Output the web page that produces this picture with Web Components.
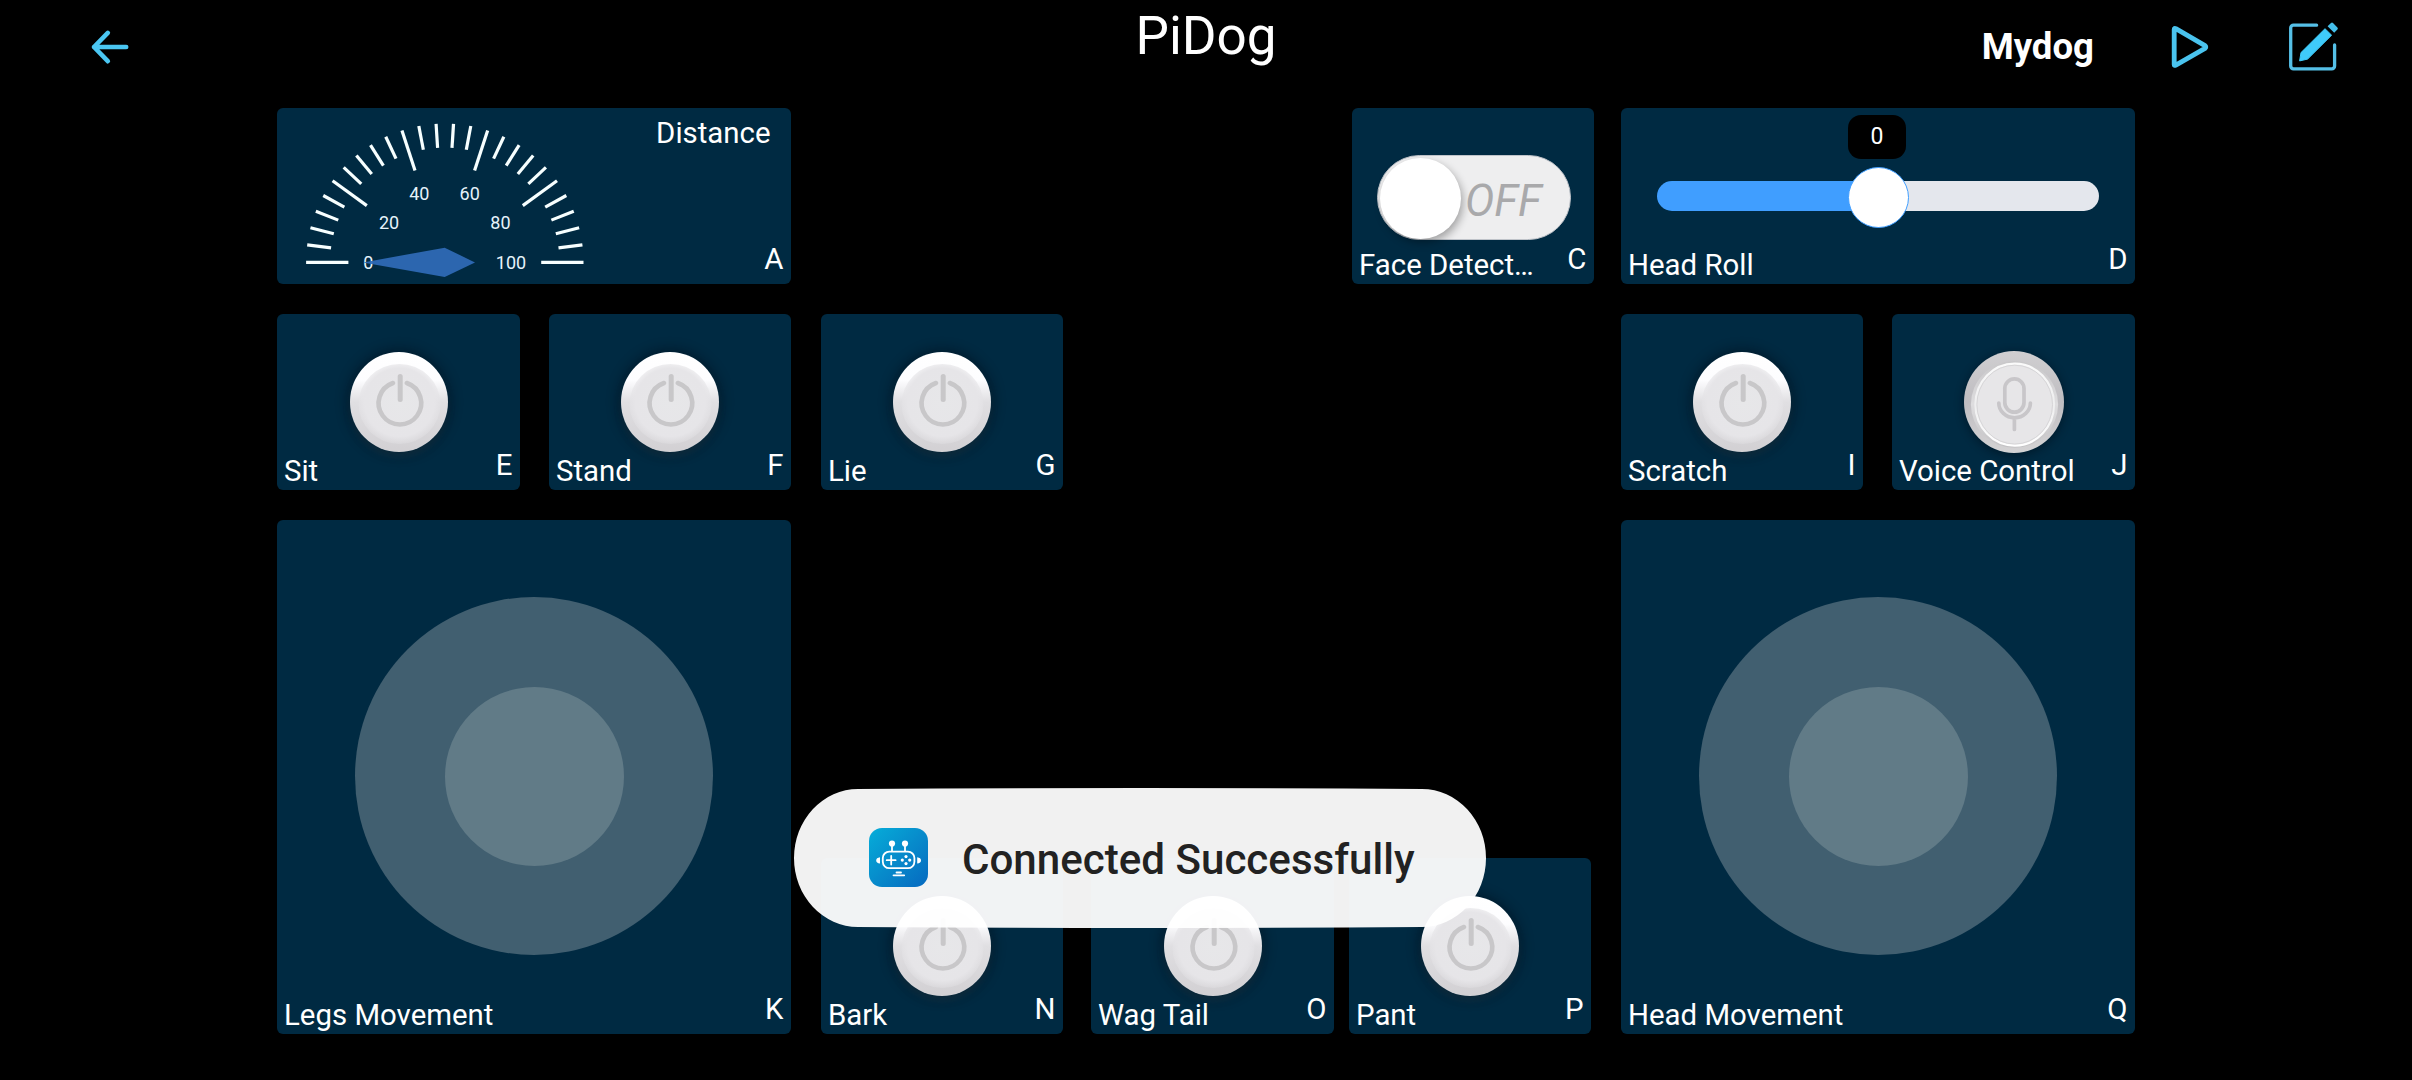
<!DOCTYPE html>
<html lang="en">
<head>
<meta charset="utf-8">
<title>PiDog</title>
<style>
  html, body { margin: 0; height: 100%; background: #000; overflow: hidden; }
  body { font-family: Roboto, "Liberation Sans", sans-serif; color: #fff; }
</style>
</head>
<body>
<pidog-app></pidog-app>
<script>
const define = (name, html, setup) => customElements.define(name, class extends HTMLElement {
  constructor() {
    super();
    this.attachShadow({ mode: 'open' });
  }
  connectedCallback() {
    this.shadowRoot.innerHTML = html;
    if (setup) setup(this.shadowRoot, this);
  }
});

define('app-header', `
<style>
  :host { display: grid; grid-template-columns: 1fr auto 1fr; height: 94px; padding: 0 72px 0 88px; box-sizing: border-box; }
  .back { align-self: center; display: flex; }
  h1 { margin: 5px 0 0; font-size: 53px; font-weight: 400; line-height: 62px; position: relative; left: -8px; }
  .right { display: flex; align-items: center; justify-content: flex-end; }
  .name { font-size: 36.6px; font-weight: 700; line-height: 43px; margin: 0 76px 2px 0; }
  .play { margin-right: 78px; }
  svg { display: block; flex: none; }
</style>
<div class="back"><svg width="44" height="44" viewBox="88 25 44 44" fill="none" stroke="#4ac6f2" stroke-width="4.6" stroke-linecap="round" stroke-linejoin="round"><path d="M126.2 47H94M107.8 32.9L94 47l13.8 14.2"/></svg></div>
<h1><slot></slot></h1>
<div class="right">
  <span class="name"><slot name="device"></slot></span>
  <svg class="play" width="40" height="48" viewBox="2170 23 40 48" fill="none" stroke="#4ac3ee" stroke-width="4.8" stroke-linejoin="round"><path d="M2174.2 29.4Q2174.2 27.8 2175.8 28.6L2205 45.6Q2206.6 47 2205 48.4L2175.8 65.2Q2174.2 66 2174.2 64.4Z"/></svg>
  <svg width="52" height="54" viewBox="2288 20 52 54">
    <path d="M2316.6 25.2H2293.5a2.8 2.8 0 0 0-2.8 2.8V66a2.8 2.8 0 0 0 2.8 2.8H2331.8a2.8 2.8 0 0 0 2.8-2.8V45" fill="none" stroke="#55bfe6" stroke-width="3.3" stroke-linecap="round"/>
    <path d="M2299.6 60.9L2301 52.6 2325 28.7 2331.6 35.2 2307.6 59.1Z" fill="#3fcbfa" stroke="#3fcbfa" stroke-width="1" stroke-linejoin="round"/>
    <path d="M2327.6 26.3L2331 22.9Q2332 21.9 2333 22.9L2337.4 27.4Q2338.4 28.4 2337.4 29.4L2334.2 32.7Z" fill="#45bfeb"/>
  </svg>
</div>`);

/* Card: the widget and the caption strip share one grid cell, so the widget stays centred. */
define('widget-card', `
<style>
  :host { display: grid; grid-template: minmax(0, 1fr) / minmax(0, 1fr); width: 242px; height: 176px; flex: none; background: #002a42; border-radius: 6px; overflow: hidden; font-size: 29.4px; line-height: 34px; }
  :host([size="wide"]) { width: 514px; }
  :host([size="large"]) { width: 514px; height: 514px; }
  .body, .foot, .top { grid-area: 1 / 1; }
  .body { display: flex; align-items: center; justify-content: center; }
  .top { align-self: start; justify-self: end; padding: 8px 20.5px 0 0; }
  .foot { align-self: end; display: flex; justify-content: space-between; align-items: flex-end; padding: 0 7.5px 2px 7px; }
  .key { margin-bottom: 6px; }
  .foot span { white-space: nowrap; }
</style>
<div class="body"><slot></slot></div>
<div class="top"><slot name="title"></slot></div>
<div class="foot"><span class="label"></span><span class="key"></span></div>`,
(root, el) => {
  root.querySelector('.label').textContent = el.getAttribute('label') || '';
  root.querySelector('.key').textContent = el.getAttribute('key');
});

define('power-button', `
<style>
  :host { display: block; width: 98px; height: 100px; border-radius: 50%; box-shadow: 0 0 12px 3px rgba(0,10,20,.42), 0 5px 6px rgba(40,70,84,.4); }
  svg { display: block; }
</style>
<svg width="98" height="100" viewBox="0 0 98 100">
  <defs>
    <linearGradient id="o" x1="0" y1="0" x2="0" y2="1"><stop offset="0" stop-color="#fff"/><stop offset=".28" stop-color="#fdfdff"/><stop offset=".5" stop-color="#e0dfe2"/><stop offset="1" stop-color="#d2d0d3"/></linearGradient>
    <radialGradient id="i" cx=".5" cy=".48" r=".52"><stop offset="0" stop-color="#e7e7e9"/><stop offset=".82" stop-color="#e6e5e8"/><stop offset="1" stop-color="#e4e3e6" stop-opacity=".35"/></radialGradient>
  </defs>
  <ellipse cx="49" cy="50" rx="49" ry="50" fill="url(#o)"/>
  <ellipse cx="49.5" cy="52" rx="41" ry="40" fill="url(#i)"/>
  <g fill="none" stroke="#c8c7c9" stroke-linecap="round"><path d="M43 31A21.3 21.3 0 1 0 56.8 31" stroke-width="4.6"/><path d="M50.2 24.6V47.6" stroke-width="5"/></g>
</svg>`);

define('mic-button', `
<style>
  :host { display: block; width: 100px; height: 102px; border-radius: 50%; box-shadow: 0 2px 8px 1px rgba(0,10,20,.45); }
  svg { display: block; }
</style>
<svg width="100" height="102" viewBox="0 0 100 102">
  <defs>
    <linearGradient id="o" x1="0" y1="0" x2="0" y2="1"><stop offset="0" stop-color="#d0cfd1"/><stop offset=".5" stop-color="#bfbdc1"/><stop offset="1" stop-color="#d4d3d4"/></linearGradient>
    <linearGradient id="m" x1="0" y1="0" x2="0" y2="1"><stop offset="0" stop-color="#c8c7c9"/><stop offset=".5" stop-color="#dedddf"/><stop offset="1" stop-color="#c4c3c5"/></linearGradient>
    <linearGradient id="r" x1="0" y1="0" x2="0" y2="1"><stop offset="0" stop-color="#fafafa"/><stop offset=".5" stop-color="#eeeeef"/><stop offset="1" stop-color="#fff"/></linearGradient>
  </defs>
  <ellipse cx="50" cy="51" rx="50" ry="51" fill="url(#o)"/>
  <ellipse cx="50.5" cy="53.4" rx="43.6" ry="43.4" fill="url(#m)"/>
  <ellipse cx="50.7" cy="53.6" rx="39.3" ry="41" fill="#e7e6e8" stroke="url(#r)" stroke-width="2.2"/>
  <ellipse cx="50.7" cy="53.6" rx="37.8" ry="39.4" fill="none" stroke="#d6d5d7" stroke-width="1"/>
  <g fill="none" stroke="#c8c6c9" stroke-width="3.7" stroke-linecap="round"><rect x="40.8" y="27.9" width="19.2" height="33.3" rx="9.6"/><path d="M34.8 52A15.8 14.8 0 0 0 66.4 52M50.4 68V78.5"/></g>
</svg>`);

define('joy-stick', `
<style>
  :host { display: grid; place-items: center; width: 358px; height: 358px; border-radius: 50%; background: #415f70; margin-bottom: 2px; }
  .knob { width: 179px; height: 179px; border-radius: 50%; background: #617b87; }
</style><div class="knob"></div>`);

define('toggle-switch', `
<style>
  :host { display: flex; align-items: center; box-sizing: border-box; width: 194px; height: 85px; margin: 2px 0 0 2px; padding: 2px 0 0 2px; border-radius: 42.5px; border: 1px solid #bfc3c9; background: #eeeeef; }
  .knob { width: 81px; height: 81px; border-radius: 50%; background: #fff; box-shadow: 2px 4px 8px rgba(0,0,0,.32); flex: none; }
  .txt { font-size: 44px; line-height: 52px; font-style: italic; color: #a9a9ab; margin: 5px 0 0 4px; }
</style><div class="knob"></div><span class="txt">OFF</span>`);

define('range-slider', `
<style>
  :host { display: grid; width: 442px; height: 176px; grid-template: minmax(0,1fr) / minmax(0,1fr); }
  .track { grid-area: 1/1; align-self: start; height: 30px; margin-top: 73px; border-radius: 15px; background: linear-gradient(90deg, #409eff 50%, #e4e7ed 50%); }
  .thumb { grid-area: 1/1; align-self: start; justify-self: center; margin-top: 59px; width: 61px; height: 61px; box-sizing: border-box; border-radius: 50%; background: #fff; border: 1px solid #409eff; }
  .tip { grid-area: 1/1; align-self: start; justify-self: center; margin: 7px 2px 0 0; width: 58px; height: 44px; border-radius: 13px; background: #000; font-size: 23px; line-height: 44.5px; text-align: center; }
</style><div class="track"></div><div class="thumb"></div><div class="tip">0</div>`);

define('arc-gauge', `
<style>:host { display: block; margin-right: auto; } svg { display: block; } text { font: 18px Roboto, sans-serif; fill: #e6f3fb; text-anchor: middle; }</style>
<svg width="340" height="176" viewBox="277 108 340 176"></svg>`,
root => {
  const cx = 444.8, cy = 262.3;
  let out = '';
  for (let i = 0; i <= 25; i++) {
    const a = Math.PI * (1 - i / 25), r = i % 5 ? 114.6 : 96.4, c = Math.cos(a), s = Math.sin(a);
    out += `<line x1="${cx + 138.7 * c}" y1="${cy - 138.7 * s}" x2="${cx + r * c}" y2="${cy - r * s}" stroke="#f7ffff" stroke-width="3.2"/>`;
  }
  [['0', 368.2, 268.6], ['20', 389, 229.2], ['40', 419.3, 200.3], ['60', 469.7, 200.3], ['80', 500.4, 229.2], ['100', 511, 268.6]]
    .forEach(([t, x, y]) => out += `<text x="${x}" y="${y}">${t}</text>`);
  out += '<polygon points="363,262.4 444.7,247.7 475,262.4 444.7,277" fill="#2f6ab6" fill-opacity=".94"/>';
  root.querySelector('svg').innerHTML = out;
});

define('toast-message', `
<style>
  :host { display: flex; align-items: center; position: absolute; left: 794px; top: 788px; width: 692px; height: 140px; box-sizing: border-box; padding-left: 75px; background: rgba(255,255,255,.945); clip-path: path("M64 1Q346 -1 628 1A64 69 0 0 1 628 139Q346 141 64 139A64 69 0 0 1 64 1Z"); color: #222; font-size: 42.1px; font-weight: 500; line-height: 50px; white-space: nowrap; }
  svg { display: block; margin: 0 34px 1px 0; flex: none; }
  span { margin-top: 3px; }
</style>
<svg width="59" height="59" viewBox="0 0 59 59">
  <defs><linearGradient id="g" x1="0" y1="0" x2="1" y2="1"><stop offset="0" stop-color="#06add9"/><stop offset=".5" stop-color="#078bcb"/><stop offset="1" stop-color="#0669c0"/></linearGradient></defs>
  <rect width="59" height="59" rx="13" fill="url(#g)"/>
  <g fill="none" stroke="#fff" stroke-width="1.8" stroke-linecap="round">
    <rect x="13.8" y="23.6" width="31.6" height="16.6" rx="6.5"/>
    <path d="M23 16V23M36 16V23M17.7 32.2H26.6M22.2 27.8V36.6M27.5 44.5H32M24.5 47.3H35.2"/>
  </g>
  <g fill="#fff"><circle cx="23" cy="15.5" r="3.1"/><circle cx="36" cy="15.5" r="3.1"/><circle cx="37" cy="28.6" r="1.6"/><circle cx="37" cy="35.6" r="1.6"/><circle cx="33.3" cy="32.1" r="1.6"/><circle cx="40.7" cy="32.1" r="1.6"/><path d="M11 29.2V35.6Q7.2 35 7.2 32.4T11 29.2ZM48.2 29.2V35.6Q52 35 52 32.4T48.2 29.2Z"/></g>
</svg>
<span><slot></slot></span>`);

define('pidog-app', `
<style>
  :host { display: flex; flex-direction: column; height: 1080px; }
  main { display: flex; flex-direction: column; gap: 30px; width: 1858px; margin: 14px 0 0 277px; }
  .row { display: flex; justify-content: space-between; align-items: flex-end; }
  .set { display: flex; align-items: flex-end; gap: 30px; }
  .g27 { gap: 27px; }
  .e, .o, .j { width: 243px; }
  .e { margin-right: -1px; } .j { margin-left: -1px; }
  .o { margin-left: -2px; } .p { margin-left: -15px; }
</style>
<app-header>PiDog<span slot="device">Mydog</span></app-header>
<main>
  <div class="row">
    <widget-card size="wide" key="A"><arc-gauge></arc-gauge><span slot="title">Distance</span></widget-card>
    <div class="set g27">
      <widget-card label="Face Detect…" key="C"><toggle-switch></toggle-switch></widget-card>
      <widget-card size="wide" label="Head Roll" key="D"><range-slider></range-slider></widget-card>
    </div>
  </div>
  <div class="row">
    <div class="set">
      <widget-card class="e" label="Sit" key="E"><power-button></power-button></widget-card>
      <widget-card label="Stand" key="F"><power-button></power-button></widget-card>
      <widget-card label="Lie" key="G"><power-button></power-button></widget-card>
    </div>
    <div class="set">
      <widget-card label="Scratch" key="I"><power-button></power-button></widget-card>
      <widget-card class="j" label="Voice Control" key="J"><mic-button></mic-button></widget-card>
    </div>
  </div>
  <div class="row">
    <div class="set">
      <widget-card size="large" label="Legs Movement" key="K"><joy-stick></joy-stick></widget-card>
      <widget-card label="Bark" key="N"><power-button></power-button></widget-card>
      <widget-card class="o" label="Wag Tail" key="O"><power-button></power-button></widget-card>
      <widget-card class="p" label="Pant" key="P"><power-button></power-button></widget-card>
    </div>
    <widget-card size="large" label="Head Movement" key="Q"><joy-stick></joy-stick></widget-card>
  </div>
</main>
<toast-message>Connected Successfully</toast-message>`);
</script>
</body>
</html>
